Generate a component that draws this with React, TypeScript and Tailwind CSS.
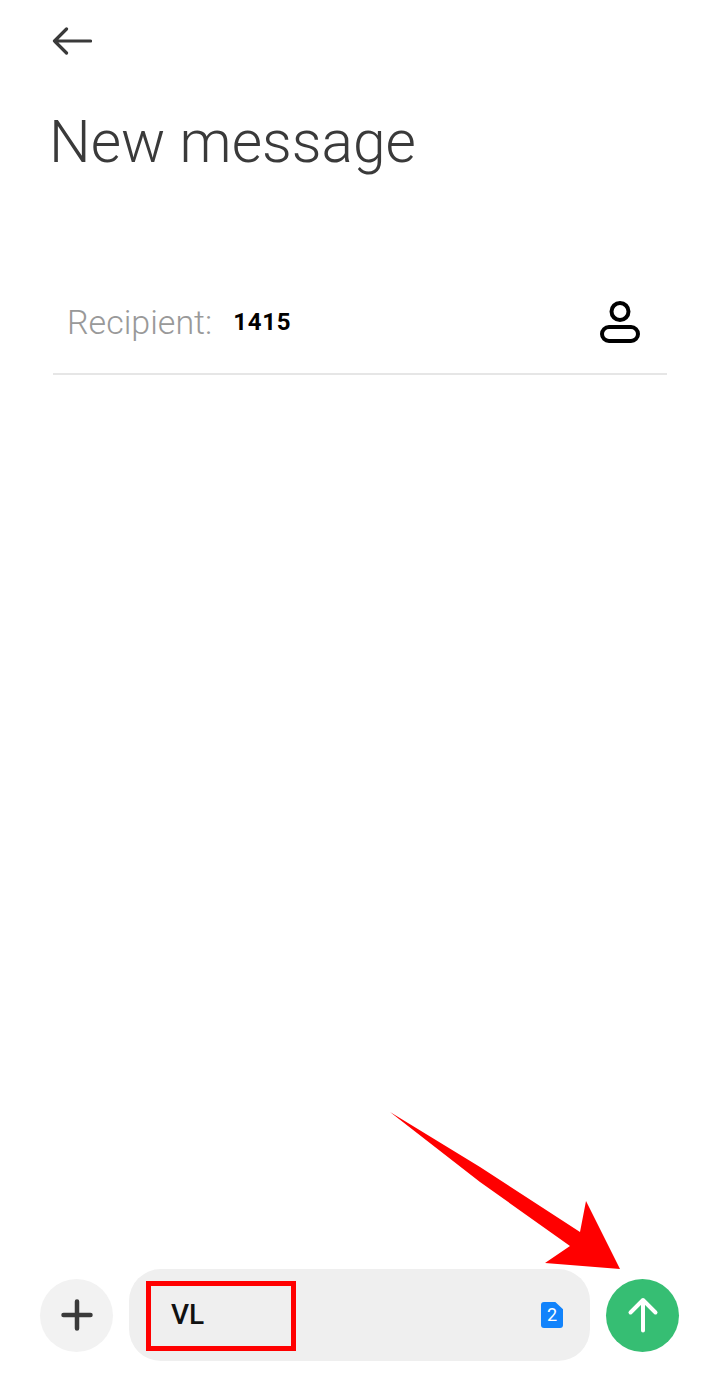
export default function App() {
  return (
    <div className="relative flex h-[1400px] w-[720px] flex-col overflow-hidden bg-white font-['Roboto',sans-serif]">
      {/* header */}
      <div className="pl-[52px] pt-[26px]">
        <svg width="40" height="30" viewBox="0 0 40 30" fill="none" stroke="#3a3a3a" strokeWidth="3.2" strokeLinecap="round" strokeLinejoin="round">
          <path d="M38.5 15H2.5M14.5 3L2.5 15L14.5 27" />
        </svg>
      </div>
      <h1 className="ml-[49px] mt-[46px] text-[58.7px] font-light leading-[80px] text-[#3a3a3a]">New message</h1>

      {/* recipient */}
      <div className="mx-[53px] mt-[97px] flex h-[96px] items-center border-b-2 border-[#e6e6e6] pb-[8px] pl-[14px] pr-[27px]">
        <span className="text-[34px] font-light text-[#999999]">Recipient:</span>
        <span className="ml-[21px] text-[24px] font-bold tracking-[0.75px] text-black">1415</span>
        <svg className="ml-auto" width="40" height="42" viewBox="0 0 40 42" fill="none" stroke="black" strokeWidth="4">
          <circle cx="20" cy="10.5" r="8.5" />
          <rect x="2" y="26" width="36" height="14" rx="7" />
        </svg>
      </div>

      {/* composer */}
      <div className="mt-auto mb-[39px] flex items-center pl-[40px]">
        <div className="flex h-[73px] w-[73px] items-center justify-center rounded-full bg-[#f2f2f2]">
          <svg width="32" height="32" viewBox="0 0 32 32" fill="none" stroke="#3a3a3a" strokeWidth="4.5" strokeLinecap="round">
            <path d="M16 2.5V29.5M2.5 16H29.5" />
          </svg>
        </div>
        <div className="relative ml-[16px] flex h-[92px] w-[461px] items-center justify-between rounded-[32px] bg-[#efefef] pl-[42px] pr-[27px]">
          <span className="text-[28px] font-medium leading-none text-[#111111]">VL</span>
          <div className="flex h-[26px] w-[22px] items-center justify-center rounded-[3px] bg-[#1283fb] [clip-path:polygon(0_0,65%_0,100%_28%,100%_100%,0_100%)]">
            <span className="text-[18px] leading-none text-white">2</span>
          </div>
          {/* red highlight box */}
          <div className="absolute left-[17px] top-[12px] h-[70px] w-[150px] border-[5px] border-[#ff0000]" />
        </div>
        <div className="ml-[16px] flex h-[73px] w-[73px] items-center justify-center rounded-full bg-[#36be73]">
          <svg width="32" height="36" viewBox="0 0 32 36" fill="none" stroke="white" strokeWidth="4" strokeLinecap="round" strokeLinejoin="round">
            <path d="M16 33.5V3M3.5 15.5L16 3L28.5 15.5" />
          </svg>
        </div>
      </div>

      {/* annotation arrow */}
      <svg className="absolute left-0 top-0" width="720" height="1400" viewBox="0 0 720 1400">
        <polygon points="390,1112 480,1167 580,1232 586,1201 620,1269 545,1263 570,1246 480,1182" fill="#ff0000" />
      </svg>
    </div>
  )
}
